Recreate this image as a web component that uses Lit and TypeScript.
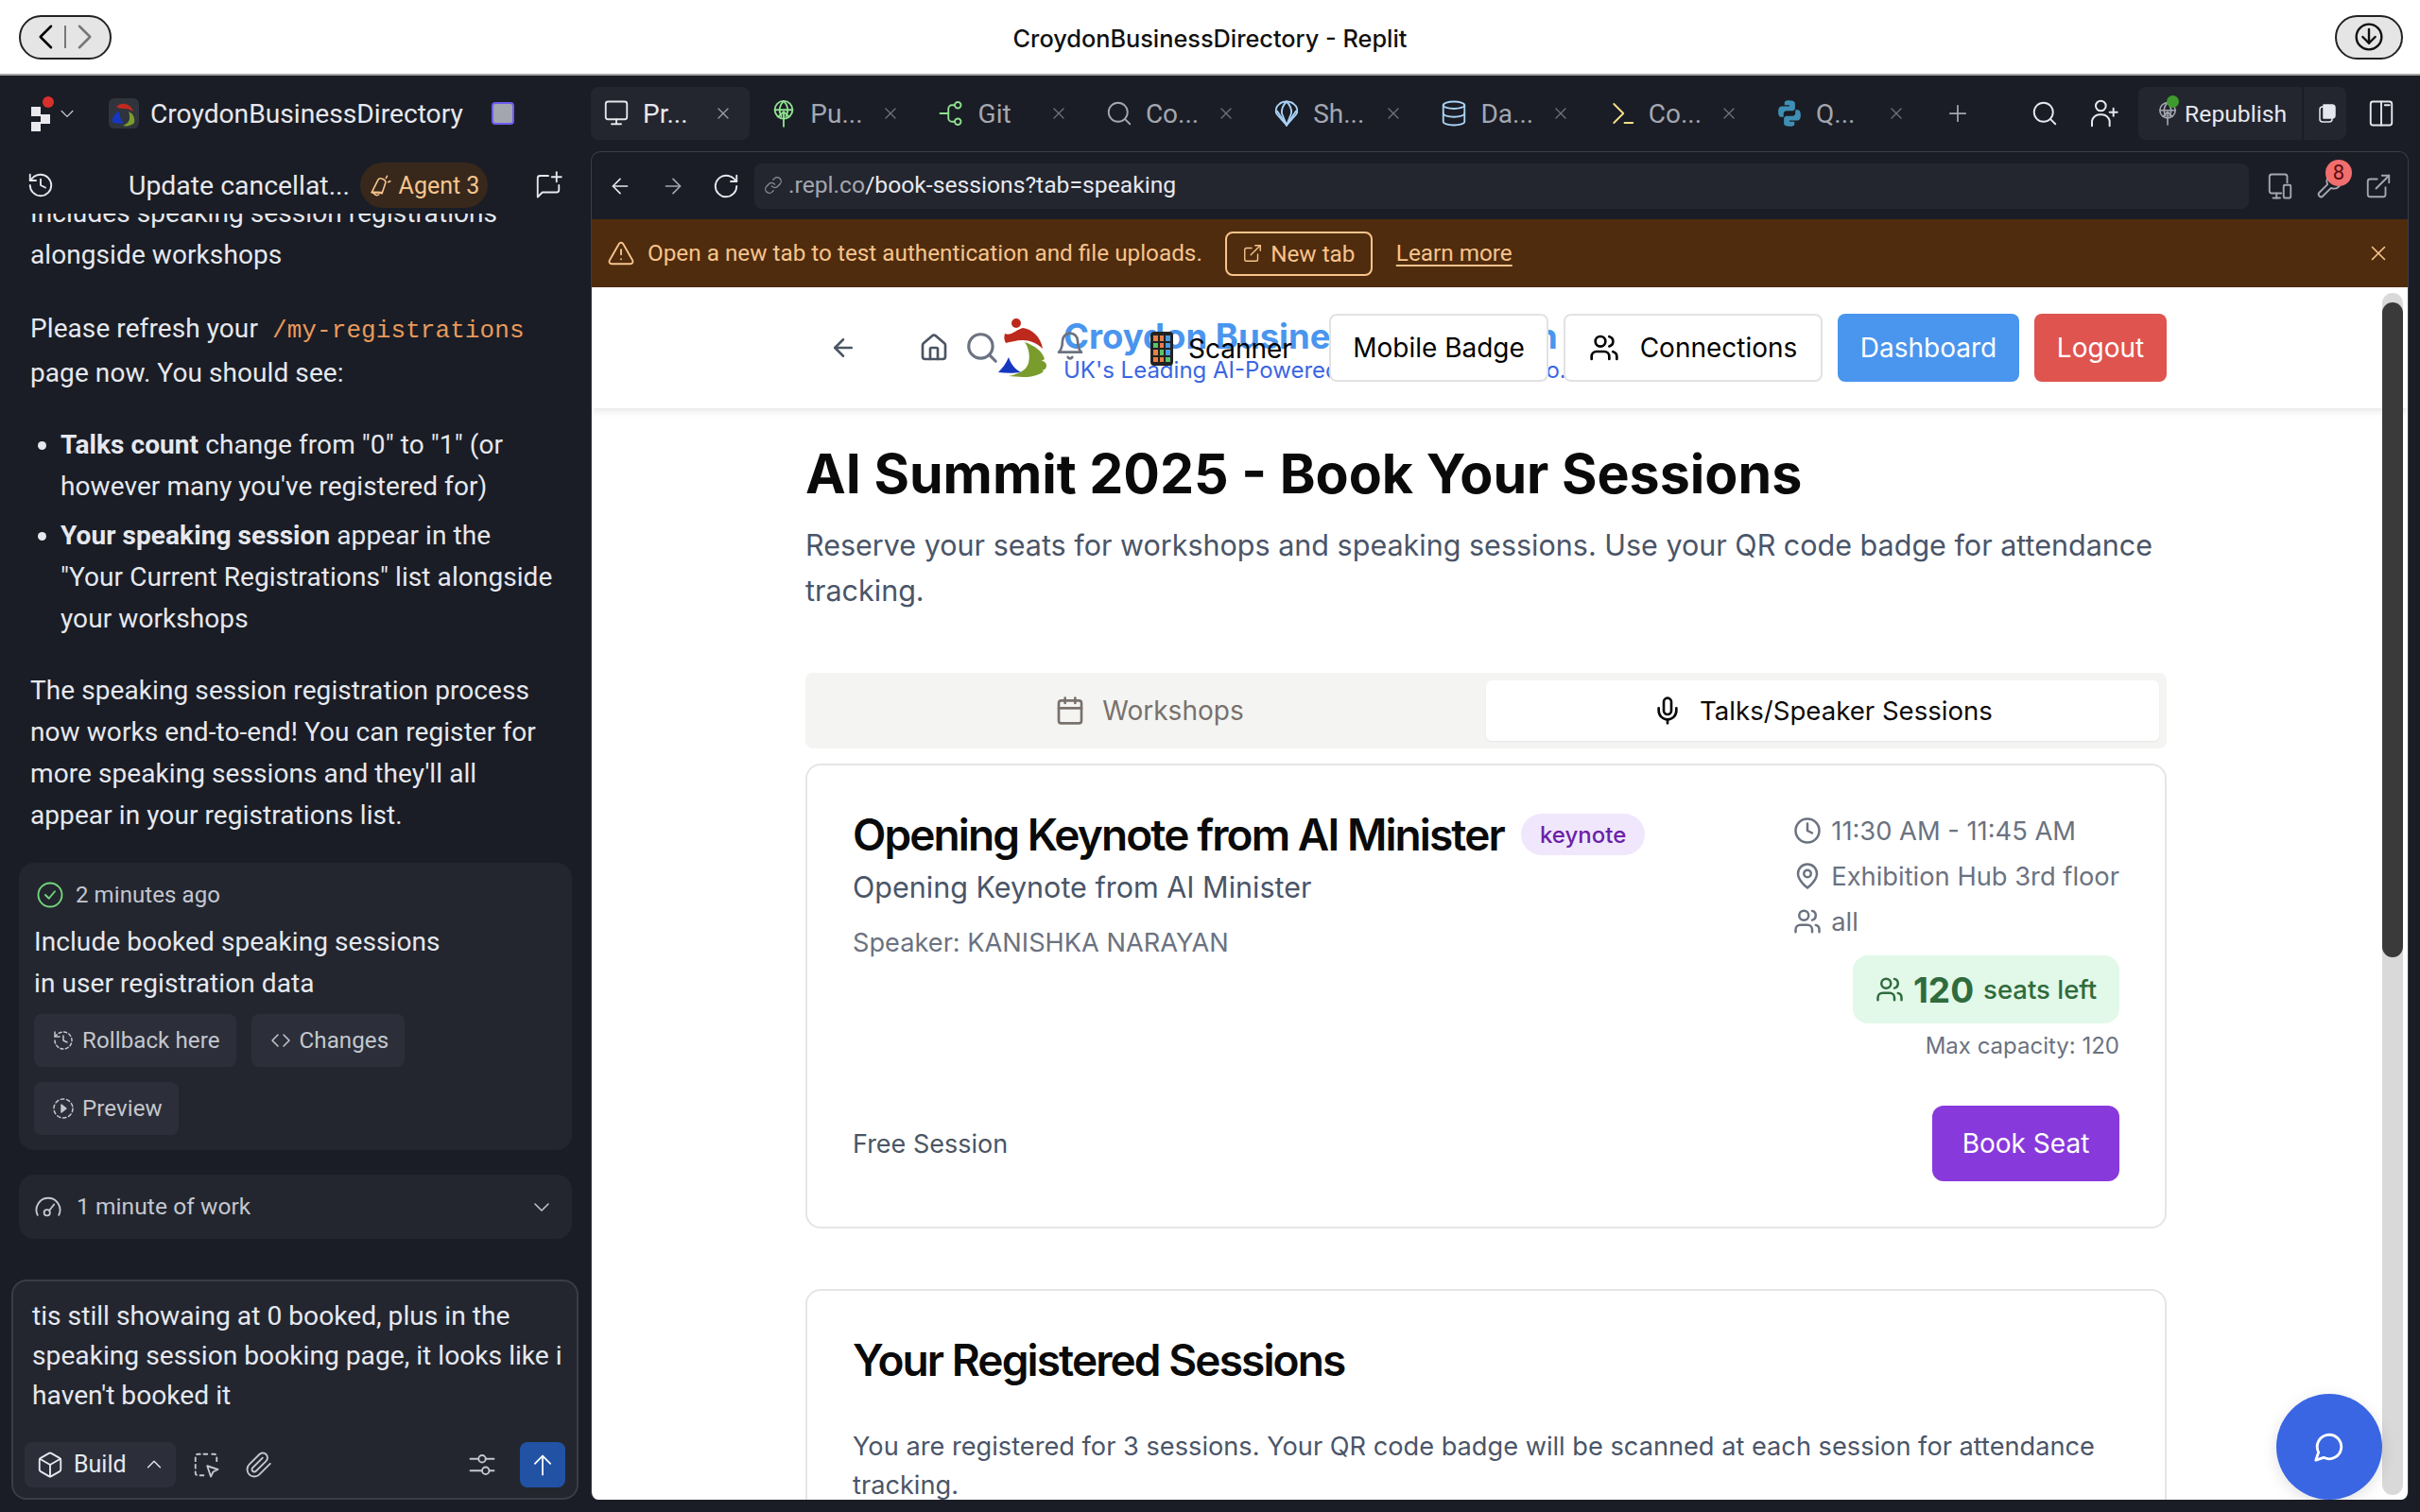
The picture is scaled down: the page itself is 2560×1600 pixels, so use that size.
import { LitElement, html, css, svg } from 'lit';
import { customElement } from 'lit/decorators.js';

// lucide style icon bodies, all on a 24x24 box
const I = {
  left: svg`<path d="m12 19-7-7 7-7"/><path d="M19 12H5"/>`,
  right: svg`<path d="M5 12h14"/><path d="m12 5 7 7-7 7"/>`,
  reload: svg`<path d="M21 12a9 9 0 1 1-9-9c2.52 0 4.93 1 6.74 2.74L21 8"/><path d="M21 3v5h-5"/>`,
  link: svg`<path d="M10 13a5 5 0 0 0 7.54.54l3-3a5 5 0 0 0-7.07-7.07l-1.72 1.71"/><path d="M14 11a5 5 0 0 0-7.54-.54l-3 3a5 5 0 0 0 7.07 7.07l1.71-1.71"/>`,
  x: svg`<path d="M18 6 6 18"/><path d="m6 6 12 12"/>`,
  plus: svg`<path d="M5 12h14"/><path d="M12 5v14"/>`,
  down: svg`<path d="m5 9 7 7 7-7"/>`,
  up: svg`<path d="m5 15 7-7 7 7"/>`,
  search: svg`<circle cx="11" cy="11" r="8"/><path d="m21 21-4.3-4.3"/>`,
  monitor: svg`<rect x="3" y="2" width="18" height="15" rx="2"/><path d="M8 21h8"/><path d="M12 17v4"/>`,
  globe: svg`<circle cx="12" cy="9" r="7.5"/><path d="M4.5 9h15"/><path d="M12 1.5c-4 4-4 9-2 13"/><path d="M12 1.5c4 4 4 9 2 13"/><path d="M12 23V11"/><path d="m7.5 15 4.5-4.5 4.5 4.5"/>`,
  git: svg`<circle cx="17" cy="5" r="2.6"/><circle cx="17" cy="19" r="2.6"/><path d="M2 12h7"/><path d="M14.4 5H12a3 3 0 0 0-3 3v8a3 3 0 0 0 3 3h2.4"/>`,
  shell: svg`<path d="M12 22 4 13c-2-3-1-7 2-9 2-2 4-2 6-2s4 0 6 2c3 2 4 6 2 9Z"/><path d="M12 22 8 12c-.5-4 1-7 4-10"/><path d="M12 22l4-10c.5-4-1-7-4-10"/><path d="M12 22 4 10"/><path d="M12 22l8-12"/>`,
  db: svg`<ellipse cx="12" cy="5" rx="9" ry="3"/><path d="M3 5v14a9 3 0 0 0 18 0V5"/><path d="M3 12a9 3 0 0 0 18 0"/>`,
  term: svg`<path d="m5 4 8 8-8 8"/><path d="M14 20h7"/>`,
  python: svg`<path fill="currentColor" stroke="none" d="M11.8 1C7.5 1 7.8 2.900 7.800 2.900V5h4.200v1H5.500S2.500 5.700 2.500 10.500 5 15 5 15h2v-2.500s-.1-2.700 2.700-2.700h4.500s2.500 0 2.500-2.500V3.600S17.100 1 11.800 1Z"/><path fill="currentColor" stroke="none" d="M12.200 23c4.300 0 4-1.900 4-1.900V19H12v-1h6.500s3 .3 3-4.500S19 9 19 9h-2v2.500s.1 2.700-2.700 2.700H9.800s-2.500 0-2.500 2.500v3.700S6.900 23 12.200 23Z"/>`,
  userPlus: svg`<circle cx="10" cy="6" r="4"/><path d="M3 22v-4a6 6 0 0 1 6-5h2a6 6 0 0 1 6 5v4"/><path d="M20 8v6"/><path d="M17 11h6"/>`,
  panels: svg`<rect x="3" y="2" width="18" height="20" rx="2"/><path d="M12 2v20"/><path d="M15 5h4"/>`,
  history: svg`<path d="M3 12a9 9 0 1 0 9-9 9.750 9.750 0 0 0-6.740 2.740L3 8"/><path d="M3 3v5h5"/><path d="M12 7v5l4 2"/>`,
  chatPlus: svg`<path d="M12 4H5a2 2 0 0 0-2 2v16l4-4h12a2 2 0 0 0 2-2v-4"/><path d="M19 1v8"/><path d="M15 5h8"/>`,
  megaphone: svg`<path d="M3 19 9 7c1-2 3-2 5-1s3 3 2 5l-3 9-3-1Z" /><path d="M3 19h10"/><path d="M5 19a3 3 0 0 0 5 2"/><path d="M18 3l-1 2"/><path d="M21 8l-2 1"/>`,
  check: svg`<circle cx="12" cy="12" r="10"/><path d="m8 12 3 3 5-6"/>`,
  dashHistory: svg`<path stroke-dasharray="3 2.500" d="M3 12a9 9 0 1 0 9-9 9.750 9.750 0 0 0-6.740 2.740L3 8"/><path d="M3 3v5h5"/><path d="M12 7v5l4 2"/>`,
  code: svg`<path d="m9 6-6 6 6 6"/><path d="m15 6 6 6-6 6"/>`,
  dashPlay: svg`<circle stroke-dasharray="3.500 2.800" cx="12" cy="12" r="10"/><path fill="currentColor" d="m10 8 5 4-5 4Z"/>`,
  gauge: svg`<path d="M3 19a10 10 0 1 1 18 0"/><circle cx="11" cy="17" r="2.500"/><path d="m13 15 4-5"/>`,
  box: svg`<path d="M21 8a2 2 0 0 0-1-1.730l-7-4a2 2 0 0 0-2 0l-7 4A2 2 0 0 0 3 8v8a2 2 0 0 0 1 1.730l7 4a2 2 0 0 0 2 0l7-4A2 2 0 0 0 21 16Z"/><path d="m3.300 7 8.700 5 8.700-5"/><path d="M12 22V12"/>`,
  select: svg`<path stroke-dasharray="3 3" d="M13 3H5a2 2 0 0 0-2 2v14a2 2 0 0 0 2 2h6"/><path stroke-dasharray="3 3" d="M17 3h2a2 2 0 0 1 2 2v5"/><path d="m13 13 9 3-4 2-2 4Z"/>`,
  clip: svg`<path d="m21.440 11.050-9.190 9.190a6 6 0 0 1-8.490-8.490l8.570-8.570A4 4 0 1 1 18 8.840l-8.590 8.570a2 2 0 0 1-2.830-2.830l8.490-8.480"/>`,
  sliders: svg`<path d="M2 7h7"/><path d="M15 7h7"/><circle cx="12" cy="7" r="3"/><path d="M2 17h10"/><path d="M18 17h4"/><circle cx="15" cy="17" r="3"/>`,
  arrowUp: svg`<path d="m5 11 7-7 7 7"/><path d="M12 4v17"/>`,
  devices: svg`<path d="M13 18H5a2 2 0 0 1-2-2V4a2 2 0 0 1 2-2h11a2 2 0 0 1 2 2v5"/><path d="M6 22h6"/><path d="M9 18v4"/><rect x="15" y="11" width="6" height="11" rx="1"/>`,
  wrench: svg`<path d="M14.700 6.300a1 1 0 0 0 0 1.400l1.600 1.600a1 1 0 0 0 1.400 0l3.770-3.770a6 6 0 0 1-7.940 7.940l-6.910 6.910a2.120 2.120 0 0 1-3-3l6.910-6.910a6 6 0 0 1 7.940-7.940l-3.760 3.760z"/>`,
  external: svg`<path d="M18 13v6a2 2 0 0 1-2 2H5a2 2 0 0 1-2-2V8a2 2 0 0 1 2-2h6"/><path d="M15 3h6v6"/><path d="m10 14 11-11"/>`,
  warn: svg`<path d="m21.730 18-8-14a2 2 0 0 0-3.480 0l-8 14A2 2 0 0 0 4 21h16a2 2 0 0 0 1.730-3Z"/><path d="M12 9v4"/><path d="M12 17h.01"/>`,
  home: svg`<path d="M3 10a2 2 0 0 1 .7-1.500l7-6a2 2 0 0 1 2.600 0l7 6a2 2 0 0 1 .7 1.500v9a2 2 0 0 1-2 2H5a2 2 0 0 1-2-2z"/><path d="M15 21v-8a1 1 0 0 0-1-1h-4a1 1 0 0 0-1 1v8"/>`,
  bell: svg`<path d="M6 8a6 6 0 0 1 12 0c0 7 3 9 3 9H3s3-2 3-9"/><path d="M10.300 21a1.940 1.940 0 0 0 3.400 0"/>`,
  users: svg`<path d="M16 21v-2a4 4 0 0 0-4-4H6a4 4 0 0 0-4 4v2"/><circle cx="9" cy="7" r="4"/><path d="M22 21v-2a4 4 0 0 0-3-3.870"/><path d="M16 3.130a4 4 0 0 1 0 7.750"/>`,
  calendar: svg`<rect x="3" y="4" width="18" height="18" rx="2"/><path d="M16 2v4"/><path d="M8 2v4"/><path d="M3 10h18"/>`,
  mic: svg`<path d="M12 2a3 3 0 0 0-3 3v7a3 3 0 0 0 6 0V5a3 3 0 0 0-3-3Z"/><path d="M19 10v2a7 7 0 0 1-14 0v-2"/><path d="M12 19v3"/>`,
  clock: svg`<circle cx="12" cy="12" r="10"/><path d="M12 6v6l4 2"/>`,
  pin: svg`<path d="M20 10c0 6-8 12-8 12s-8-6-8-12a8 8 0 0 1 16 0Z"/><circle cx="12" cy="10" r="3"/>`,
  chat: svg`<path d="M7.900 20A9 9 0 1 0 4 16.100L2 22Z"/>`,
};

const icon = (body: unknown, size: number, weight = 1.5) => html`<svg
  class="ic" width=${size} height=${size} viewBox="0 0 24 24" fill="none"
  stroke="currentColor" stroke-width=${weight} stroke-linecap="round" stroke-linejoin="round">${body}</svg>`;

const TABS = [
  { label: 'Pr...', icon: I.monitor, color: '#e4e6ec', active: true },
  { label: 'Pu...', icon: I.globe, color: '#8fe08f' },
  { label: 'Git', icon: I.git, color: '#8fe08f' },
  { label: 'Co...', icon: I.search, color: '#a4a7b0' },
  { label: 'Sh...', icon: I.shell, color: '#a9d2f5' },
  { label: 'Da...', icon: I.db, color: '#a9d2f5' },
  { label: 'Co...', icon: I.term, color: '#f4df8c' },
  { label: 'Q...', icon: I.python, color: '#3f8fb5' },
];

@customElement('app-root')
export class AppRoot extends LitElement {
  static styles = css`
    :host {
      display: block;
      width: 2560px;
      height: 1600px;
      overflow: hidden;
      background: #1a1d25;
      font-family: 'Roboto', 'Liberation Sans', sans-serif;
      color: #e6e8ef;
    }
    * { box-sizing: border-box; }
    .ic { display: block; flex: none; }

    /* mac title bar */
    .titlebar {
      height: 80px;
      background: #fff;
      border-bottom: 2px solid #a3a3a3;
      display: flex;
      align-items: center;
      justify-content: space-between;
      padding: 0 18px 0 20px;
      position: relative;
      color: #111;
    }
    .title {
      position: absolute;
      left: 0;
      right: 0;
      top: 25px;
      text-align: center;
      font: 500 25.3px 'Inter', sans-serif;
    }
    .navpill {
      width: 98px;
      height: 47px;
      border: 2px solid #222;
      border-radius: 24px;
      background: #e5e5e5;
      display: flex;
      align-items: center;
      justify-content: space-between;
      padding: 0 12px;
      color: #000;
    }
    .navpill .sep { width: 2px; height: 24px; background: #777; }
    .navpill .off { color: #777; }
    .dl {
      width: 72px;
      height: 47px;
      border: 2px solid #222;
      border-radius: 24px;
      background: #e5e5e5;
      display: flex;
      align-items: center;
      justify-content: center;
    }

    .workspace {
      height: 1520px;
      display: grid;
      grid-template-columns: 625px 1fr;
    }

    /* left column */
    .side { display: flex; flex-direction: column; min-width: 0; height: 1520px; }
    .brandrow { height: 80px; display: flex; align-items: center; padding-left: 33px; }
    .rlogo { position: relative; width: 21px; height: 32px; margin-top: 2px; }
    .rlogo i { position: absolute; background: #e8e8ee; width: 10px; height: 10px; }
    .rlogo b {
      position: absolute;
      right: -3px;
      top: -3px;
      width: 12px;
      height: 12px;
      border-radius: 50%;
      background: #d8302c;
    }
    .brandchev { margin: 0 0 0 7px; color: #c9ccd4; }
    .appicon { margin-left: 34px; border-radius: 6px; background: #30343d; }
    .appname { margin-left: 12px; font-size: 28.2px; color: #e6e8ef; white-space: nowrap; }
    .stop {
      margin-left: 30px;
      width: 24px;
      height: 24px;
      border: 2px solid #6e5cf0;
      border-radius: 4px;
      background: #a3a6ae;
    }
    .chathead {
      height: 60px;
      margin-bottom: 6px;
      display: flex;
      align-items: center;
      padding: 12px 30px 0 28px;
      color: #e6e8ef;
      flex: none;
    }
    .chathead .name { margin-left: 78px; width: 245px; font-size: 28.4px; white-space: nowrap; }
    .agent {
      height: 48px;
      width: 135px;
      border-radius: 24px;
      background: #38281c;
      color: #f7c48d;
      font-size: 25px;
      display: flex;
      align-items: center;
      justify-content: center;
      gap: 6px;
    }
    .chathead .new { margin-left: auto; }

    .log {
      flex: 1;
      min-height: 0;
      overflow: hidden;
      padding: 0 20px;
      white-space: nowrap;
      font-size: 28px;
      line-height: 44px;
      letter-spacing: 0.08px;
    }
    .log .text { padding: 0 12px; margin: 0 0 32px; }
    .log .text.first { margin: -22px 0 34px; }
    .log code {
      font: 26px 'Liberation Mono', monospace;
      color: #e89a5c;
      line-height: 46px;
      padding: 0 8px;
    }
    .log ul { margin: 0 0 32px; padding: 0 0 0 44px; }
    .log li { margin-bottom: 8px; }
    .log li:last-child { margin-bottom: 0; }
    .log strong { font-weight: 700; }
    .card {
      background: #23262f;
      border-radius: 16px;
      padding: 16px 16px;
      height: 304px;
      margin-top: -4px;
    }
    .card .when {
      display: flex;
      align-items: center;
      gap: 12px;
      font-size: 24px;
      line-height: 36px;
      color: #c4c7cf;
      margin-left: 2px;
    }
    .when .ic { color: #74d67c; }
    .card .msg { margin-top: 10px; }
    .acts { display: flex; flex-wrap: wrap; gap: 16px; margin-top: 10px; width: 420px; }
    .act {
      height: 56px;
      padding: 0 17px 0 19px;
      background: #2c2f39;
      border-radius: 8px;
      display: flex;
      align-items: center;
      gap: 8px;
      font-size: 24.1px;
      color: #c4c7cf;
    }
    .work {
      margin-top: 26px;
      height: 68px;
      background: #23262f;
      border-radius: 16px;
      padding: 0 20px 0 16px;
      display: flex;
      align-items: center;
      gap: 15px;
      font-size: 24.5px;
      color: #c4c7cf;
    }
    .work .ic:last-child { margin-left: auto; }

    .composer {
      flex: none;
      height: 233px;
      margin: 0 13px 13px 12px;
      background: #23262f;
      border: 2px solid #3a3d47;
      border-radius: 16px;
      padding: 16px 20px 0 20px;
      font-size: 28.2px;
      line-height: 42px;
      white-space: nowrap;
      display: flex;
      flex-direction: column;
      position: relative;
    }
    .tools {
      margin: auto -8px 11px -8px;
      display: flex;
      align-items: center;
      color: #c4c7cf;
    }
    .build {
      width: 160px;
      height: 48px;
      border-radius: 8px;
      background: #2c2f39;
      display: flex;
      align-items: center;
      padding: 0 12px;
      gap: 10px;
      font-size: 25px;
      color: #e6e8ef;
    }
    .build .ic:last-child { margin-left: auto; }
    .tools .sel { margin-left: 17px; }
    .tools .att { margin-left: 26px; }
    .tools .cfg { margin-left: auto; }
    .send {
      margin-left: 25px;
      width: 48px;
      height: 48px;
      border-radius: 8px;
      background: #2152a3;
      color: #fff;
      display: flex;
      align-items: center;
      justify-content: center;
    }

    /* right column */
    .main { display: flex; flex-direction: column; min-width: 0; height: 1520px; padding: 0 12px 13px 0; }
    .tabrow { height: 80px; flex: none; display: flex; align-items: center; color: #a4a7b0; }
    .tabs { display: flex; gap: 9.3px; }
    .tab {
      width: 168px;
      height: 56px;
      border-radius: 8px;
      display: flex;
      align-items: center;
      padding: 0 18px 0 12px;
      gap: 13px;
      font-size: 28px;
    }
    .tab.on { background: #23262f; color: #e6e8ef; }
    .tab .close { margin-left: auto; color: #70737c; }
    .tab.on .close { color: #9a9da6; }
    .tabplus { margin-left: 23px; color: #a4a7b0; }
    .tabrow .find { margin-left: 63px; color: #e6e8ef; }
    .tabrow .invite { margin-left: 31px; color: #e6e8ef; }
    .publish {
      margin-left: 21px;
      width: 220px;
      height: 56px;
      border-radius: 8px;
      background: #23262f;
      display: flex;
      align-items: center;
      position: relative;
      color: #e6e8ef;
    }
    .publish .go {
      width: 175px;
      height: 56px;
      display: flex;
      align-items: center;
      padding-left: 18px;
      gap: 5px;
      font-size: 24.7px;
      border-right: 2px solid #1a1d25;
      position: relative;
    }
    .publish .dot {
      position: absolute;
      left: 30px;
      top: 9px;
      width: 13px;
      height: 13px;
      border-radius: 50%;
      background: #3f9a2e;
    }
    .publish .copy { margin-left: 12px; }
    .tabrow .layout { margin-left: 22px; color: #e6e8ef; }

    .panel {
      flex: 1;
      min-height: 0;
      border: 1px solid #3a3d47;
      border-bottom: 0;
      border-radius: 10px 10px 8px 8px;
      overflow: hidden;
      display: flex;
      flex-direction: column;
      background: #1a1d25;
    }
    .urlrow {
      height: 71px;
      flex: none;
      display: flex;
      align-items: center;
      padding: 0 16px 0 17px;
      color: #e6e8ef;
    }
    .urlrow .fwd { margin-left: 30px; color: #a4a7b0; }
    .urlrow .rel { margin-left: 28px; }
    .url {
      margin-left: 15px;
      flex: 1;
      height: 48px;
      border-radius: 8px;
      background: #23262f;
      display: flex;
      align-items: center;
      padding: 0 0 2px 10px;
      font-size: 24.7px;
      gap: 6px;
      white-space: nowrap;
      color: #e6e8ef;
    }
    .url .ic { color: #8b8e97; }
    .url .host { color: #a4a7b0; }
    .urlrow .dev { margin-left: 18px; color: #a4a7b0; }
    .urlrow .wr { margin-left: 22px; color: #a4a7b0; position: relative; }
    .badge {
      position: absolute;
      left: 11px;
      top: -13px;
      width: 28px;
      height: 28px;
      border-radius: 14px;
      background: #f06e6e;
      color: #5f0c0c;
      font-size: 22px;
      line-height: 28px;
      text-align: center;
    }
    .urlrow .ext { margin-left: 22px; color: #a4a7b0; }

    .banner {
      height: 72px;
      flex: none;
      background: #4f2c0d;
      color: #f7c48d;
      display: flex;
      align-items: center;
      padding: 0 18px 0 16px;
      font-size: 24.3px;
      white-space: nowrap;
    }
    .banner .msg { margin-left: 13px; padding-bottom: 2px; }
    .newtab {
      margin-left: 24px;
      height: 47px;
      width: 156px;
      border: 2px solid #f7c48d;
      border-radius: 8px;
      display: flex;
      align-items: center;
      justify-content: center;
      gap: 8px;
    }
    .banner .more { margin-left: 25px; padding-bottom: 2px; text-decoration: underline; text-underline-offset: 4px; }
    .banner .shut { margin-left: auto; }

    /* the previewed page */
    .page {
      flex: 1;
      min-height: 0;
      background: #fff;
      position: relative;
      overflow: hidden;
      font-family: 'Inter', sans-serif;
      color: #0a0a0a;
    }
    .bar {
      position: absolute;
      top: 6px;
      bottom: 5px;
      right: 5px;
      width: 22px;
      border-radius: 11px;
      background: #d9d9d9;
    }
    .bar i {
      display: block;
      height: 693px;
      margin-top: 10px;
      border-radius: 11px;
      background: #3a3a3a;
    }
    .chatbtn {
      position: absolute;
      right: 27px;
      bottom: 0;
      width: 112px;
      height: 112px;
      border-radius: 50%;
      background: #3b66e3;
      color: #fff;
      display: flex;
      align-items: center;
      justify-content: center;
      box-shadow: 0 4px 16px rgba(0, 0, 0, 0.12);
    }
    .nav {
      height: 128px;
      background: #fff;
      box-shadow: 0 2px 8px rgba(0, 0, 0, 0.12);
      display: flex;
      align-items: center;
      justify-content: flex-end;
      padding-right: 255px;
      gap: 16px;
      position: relative;
    }
    .over { position: absolute; display: flex; align-items: center; }
    .over.back { left: 251px; top: 49px; color: #4b5563; }
    .over.home { left: 346px; top: 48px; color: #4b5563; }
    .over.find { left: 394px; top: 45px; color: #6b7280; }
    .over.bell { left: 490px; top: 46px; color: #6b7280; }
    .over.logo { left: 427px; top: 32px; }
    .brand { position: absolute; left: 499px; top: 30px; white-space: nowrap; }
    .brand .big { font-size: 36.5px; font-weight: 700; line-height: 44px; color: #4a95ee; }
    .brand .small { font-size: 24px; line-height: 28px; color: #3b66e3; }
    .over.scan { left: 591px; top: 43px; height: 44px; gap: 16px; font-size: 28px; color: #000; }
    .phone {
      width: 24px;
      height: 36px;
      border-radius: 4px;
      background: #222;
      padding: 4px 3px;
      display: grid;
      grid-template-columns: repeat(3, 1fr);
      grid-template-rows: repeat(4, 1fr);
      gap: 2px;
    }
    .phone i { background: #e6804a; }
    .phone i:nth-child(3n) { background: #4a9be6; }
    .phone i:nth-child(4n) { background: #58c46a; }
    .navbtn {
      height: 72px;
      border-radius: 8px;
      display: flex;
      align-items: center;
      justify-content: center;
      font-size: 28px;
      position: relative;
      background: #fff;
      border: 2px solid #e2e2e2;
      color: #000;
      gap: 22px;
    }
    .navbtn.badge-btn { width: 232px; }
    .navbtn.conn { width: 274px; }
    .navbtn.dash { width: 192px; background: #4a95ee; border: 0; color: #fff; }
    .navbtn.out { width: 140px; background: #df544f; border: 0; color: #fff; }

    .content { width: 1440px; margin-left: 226px; }
    h1 { margin: 34px 0 0; font-size: 57.3px; line-height: 70px; font-weight: 700; white-space: nowrap; }
    .lead { margin: 17px 0 0; font-size: 30.5px; line-height: 48px; color: #4a5568; width: 1440px; }
    .switch {
      margin-top: 63px;
      height: 80px;
      border-radius: 8px;
      background: #f4f4f2;
      padding: 8px;
      display: grid;
      grid-template-columns: 1fr 1fr;
    }
    .switch div {
      display: flex;
      align-items: center;
      justify-content: center;
      gap: 18px;
      font-size: 28px;
      color: #78716c;
      border-radius: 6px;
    }
    .switch .on { background: #fff; color: #0c0a09; font-size: 27.6px; box-shadow: 0 1px 2px rgba(0, 0, 0, 0.06); }
    .session {
      margin-top: 16px;
      height: 492px;
      border: 2px solid #e5e5e5;
      border-radius: 16px;
      padding: 45px 48px 48px;
      position: relative;
    }
    .session .head { display: flex; align-items: center; gap: 18px; }
    h2 {
      margin: 0;
      font-size: 46px;
      line-height: 56px;
      font-weight: 600;
      letter-spacing: -1.9px;
      white-space: nowrap;
    }
    .kind {
      height: 44px;
      padding: 0 20px;
      border-radius: 22px;
      background: #f0e7fc;
      color: #6b21a8;
      font-size: 24px;
      font-weight: 500;
      display: flex;
      align-items: center;
    }
    .sub { margin-top: 4px; font-size: 30.5px; line-height: 48px; color: #4a5568; }
    .spk { margin-top: 15px; font-size: 27.2px; line-height: 40px; color: #6b7280; }
    .facts {
      position: absolute;
      right: 48px;
      top: 45px;
      display: flex;
      flex-direction: column;
      align-items: flex-end;
    }
    .facts .list { align-self: flex-start; }
    .fact { display: flex; align-items: center; gap: 10px; height: 48px; font-size: 27.3px; color: #6b7280; }
    .seats {
      margin-top: 12px;
      height: 72px;
      width: 282px;
      border-radius: 16px;
      background: #e2f8e8;
      color: #2f6b3d;
      display: flex;
      align-items: center;
      justify-content: center;
      gap: 10px;
      font-size: 27.5px;
      font-weight: 500;
    }
    .seats b { font-size: 37px; font-weight: 700; }
    .cap { margin-top: 8px; font-size: 24px; line-height: 32px; color: #6b7280; }
    .foot {
      position: absolute;
      left: 48px;
      right: 48px;
      bottom: 48px;
      display: flex;
      align-items: center;
      justify-content: space-between;
      font-size: 27px;
      color: #4b5563;
    }
    .book {
      width: 198px;
      height: 80px;
      border-radius: 12px;
      background: #8839dc;
      color: #fff;
      font-size: 28px;
      display: flex;
      align-items: center;
      justify-content: center;
    }
    .mine {
      margin-top: 64px;
      height: 400px;
      border: 2px solid #e5e5e5;
      border-radius: 16px;
      padding: 45px 48px 48px;
    }
    .mine p { margin: 43px 0 0; font-size: 27.2px; line-height: 41px; color: #4a5568; }
  `;

  private logo() {
    return html`<svg width="56" height="64" viewBox="0 0 56 64" class="ic">
      <circle cx="22" cy="6" r="5" fill="#bd2a1d"/>
      <path fill="#bd2a1d" d="M10 17c6 3 12-4 19-6 9 1 19 9 21 22-6-6-14-9-21-9-7 0-13 2-18 3-2-3-2-7-1-10Z"/>
      <path fill="#7a9c2c" d="M31 26c11 4 19 10 21 18l-5 3c0 5 1 8 4 10-5 4-13 6-21 6-6 0-12-1-16-1 10-2 19-6 21-14 2-8 0-16-4-22Z"/>
      <circle cx="49" cy="51" r="5" fill="#7a9c2c"/>
      <path fill="#1537c0" d="M14 42c2 7 7 13 13 16-7 1-16 1-24 0 4-4 8-9 11-16Z"/>
    </svg>`;
  }

  render() {
    return html`
      <div class="titlebar">
        <div class="navpill">
          ${icon(svg`<path d="m16 3-9 9 9 9"/>`, 30, 2)}
          <span class="sep"></span>
          <span class="off">${icon(svg`<path d="m8 3 9 9-9 9"/>`, 30, 2)}</span>
        </div>
        <div class="title">CroydonBusinessDirectory - Replit</div>
        <div class="dl">${icon(svg`<circle cx="12" cy="12" r="10"/><path d="M12 6v11"/><path d="m7 12 5 5 5-5"/>`, 32, 1.8)}</div>
      </div>

      <div class="workspace">
        <section class="side">
          <div class="brandrow">
            <div class="rlogo">
              <i style="left:0;top:8px"></i><i style="left:10px;top:16px"></i><i style="left:0;top:24px"></i>
              <b></b>
            </div>
            <span class="brandchev">${icon(I.down, 20)}</span>
            <svg class="appicon" width="32" height="32" viewBox="0 0 32 32">
              <path fill="#c22a20" d="M8 9c3-3 6-4 9-3 4 0 8 4 9 8-3-2-6-3-8-3-4 0-7 0-10-2Z"/>
              <path fill="#7a9c2c" d="M21 14c5 2 7 7 6 12-3 3-8 4-12 3 4-2 7-4 7-8 0-3 0-5-1-7Z"/>
              <path fill="#1537c0" d="M11 14c0 5 2 9 5 12-4 1-9 1-12-1-1-4 2-9 7-11Z"/>
            </svg>
            <span class="appname">CroydonBusinessDirectory</span>
            <span class="stop"></span>
          </div>

          <div class="chathead">
            ${icon(I.history, 30)}
            <span class="name">Update cancellat...</span>
            <span class="agent">${icon(I.megaphone, 26)}Agent 3</span>
            <span class="new">${icon(I.chatPlus, 30)}</span>
          </div>

          <div class="log">
            <p class="text first">Includes speaking session registrations<br />alongside workshops</p>
            <p class="text">Please refresh your <code>/my-registrations</code><br />page now. You should see:</p>
            <ul>
              <li><strong>Talks count</strong> change from "0" to "1" (or<br />however many you've registered for)</li>
              <li><strong>Your speaking session</strong> appear in the<br />"Your Current Registrations" list alongside<br />your workshops</li>
            </ul>
            <p class="text">The speaking session registration process<br />now works end-to-end! You can register for<br />more speaking sessions and they'll all<br />appear in your registrations list.</p>
            <div class="card">
              <div class="when">${icon(I.check, 30)}2 minutes ago</div>
              <div class="msg">Include booked speaking sessions<br />in user registration data</div>
              <div class="acts">
                <span class="act">${icon(I.dashHistory, 24)}Rollback here</span>
                <span class="act">${icon(I.code, 24)}Changes</span>
                <span class="act">${icon(I.dashPlay, 24)}Preview</span>
              </div>
            </div>
            <div class="work">${icon(I.gauge, 30)}1 minute of work ${icon(I.down, 24)}</div>
          </div>

          <div class="composer">
            tis still showaing at 0 booked, plus in the<br />speaking session booking page, it looks like i<br />haven't booked it
            <div class="tools">
              <span class="build">${icon(I.box, 30)}Build ${icon(I.up, 22)}</span>
              <span class="sel">${icon(I.select, 30)}</span>
              <span class="att">${icon(I.clip, 30)}</span>
              <span class="cfg">${icon(I.sliders, 30)}</span>
              <span class="send">${icon(I.arrowUp, 28)}</span>
            </div>
          </div>
        </section>

        <section class="main">
          <div class="tabrow">
            <div class="tabs">
              ${TABS.map(
                (t) => html`<div class="tab ${t.active ? 'on' : ''}">
                  <span style="color:${t.color}">${icon(t.icon, 30)}</span>
                  <span>${t.label}</span>
                  <span class="close">${icon(I.x, 20)}</span>
                </div>`,
              )}
            </div>
            <span class="tabplus">${icon(I.plus, 28)}</span>
            <span class="find">${icon(I.search, 30)}</span>
            <span class="invite">${icon(I.userPlus, 32)}</span>
            <div class="publish">
              <span class="go">
                <span style="color:#a4a7b0">${icon(I.globe, 26)}</span>
                Republish
                <span class="dot"></span>
              </span>
              <span class="copy">${icon(svg`<rect x="5" y="5" width="13" height="16" rx="3"/><path fill="currentColor" d="M9 3h9a3 3 0 0 1 3 3v8a3 3 0 0 1-3 3H9Z"/>`, 24)}</span>
            </div>
            <span class="layout">${icon(I.panels, 30)}</span>
          </div>

          <div class="panel">
            <div class="urlrow">
              ${icon(I.left, 26)}
              <span class="fwd">${icon(I.right, 26)}</span>
              <span class="rel">${icon(I.reload, 30)}</span>
              <div class="url">
                ${icon(I.link, 20)}
                <span><span class="host">.repl.co</span>/book-sessions?tab=speaking</span>
              </div>
              <span class="dev">${icon(I.devices, 30)}</span>
              <span class="wr">${icon(I.wrench, 30)}<span class="badge">8</span></span>
              <span class="ext">${icon(I.external, 30)}</span>
            </div>

            <div class="banner">
              ${icon(I.warn, 30)}
              <span class="msg">Open a new tab to test authentication and file uploads.</span>
              <span class="newtab">${icon(I.external, 22)}New tab</span>
              <span class="more">Learn more</span>
              <span class="shut">${icon(I.x, 26)}</span>
            </div>

            <div class="page">
              <div class="nav">
                <div class="brand">
                  <div class="big">Croydon Business Federation</div>
                  <div class="small">UK's Leading AI-Powered Business Market Co.</div>
                </div>
                <span class="over back">${icon(I.left, 30, 2)}</span>
                <span class="over home">${icon(I.home, 32, 2)}</span>
                <span class="over logo">${this.logo()}</span>
                <span class="over find">${icon(I.search, 38, 2)}</span>
                <span class="over bell">${icon(I.bell, 32, 2)}</span>
                <span class="over scan">
                  <span class="phone">${Array.from({ length: 12 }, () => html`<i></i>`)}</span>Scanner
                </span>
                <span class="navbtn badge-btn">Mobile Badge</span>
                <span class="navbtn conn">${icon(I.users, 32, 2)}Connections</span>
                <span class="navbtn dash">Dashboard</span>
                <span class="navbtn out">Logout</span>
              </div>

              <div class="content">
                <h1>AI Summit 2025 - Book Your Sessions</h1>
                <p class="lead">Reserve your seats for workshops and speaking sessions. Use your QR code badge for attendance tracking.</p>
                <div class="switch">
                  <div>${icon(I.calendar, 32, 2)}Workshops</div>
                  <div class="on">${icon(I.mic, 32, 2)}Talks/Speaker Sessions</div>
                </div>

                <article class="session">
                  <div class="head">
                    <h2>Opening Keynote from AI Minister</h2>
                    <span class="kind">keynote</span>
                  </div>
                  <div class="sub">Opening Keynote from AI Minister</div>
                  <div class="spk">Speaker: KANISHKA NARAYAN</div>
                  <div class="facts">
                    <div class="list">
                      <div class="fact">${icon(I.clock, 30, 2)}11:30 AM - 11:45 AM</div>
                      <div class="fact">${icon(I.pin, 30, 2)}Exhibition Hub 3rd floor</div>
                      <div class="fact">${icon(I.users, 30, 2)}all</div>
                    </div>
                    <div class="seats">${icon(I.users, 30, 2)}<b>120</b> seats left</div>
                    <div class="cap">Max capacity: 120</div>
                  </div>
                  <div class="foot">
                    <span>Free Session</span>
                    <span class="book">Book Seat</span>
                  </div>
                </article>

                <article class="mine">
                  <h2>Your Registered Sessions</h2>
                  <p>You are registered for 3 sessions. Your QR code badge will be scanned at each session for attendance tracking.</p>
                </article>
              </div>

              <div class="bar"><i></i></div>
              <div class="chatbtn">${icon(I.chat, 34, 2)}</div>
            </div>
          </div>
        </section>
      </div>
    `;
  }
}
